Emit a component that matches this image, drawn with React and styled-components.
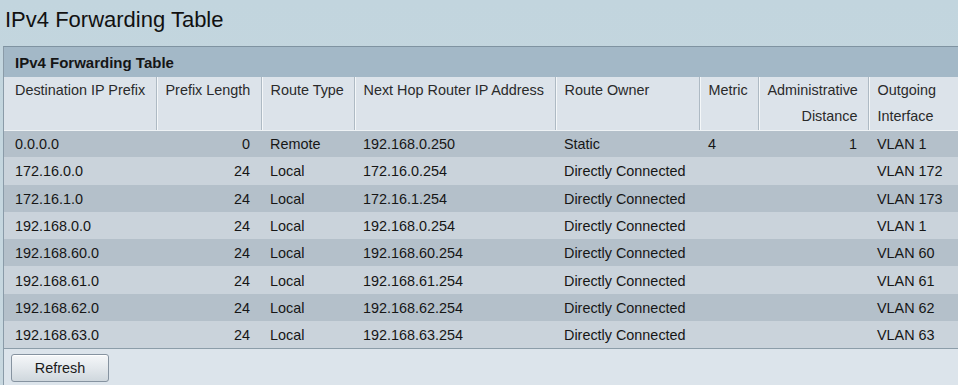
import styled, { createGlobalStyle } from "styled-components";

const GlobalStyle = createGlobalStyle`
  html, body {
    margin: 0;
    padding: 0;
    overflow: hidden;
  }
  body {
    background: linear-gradient(180deg, #c2d5de 0%, #c8d8e0 100%);
    font-family: "Liberation Sans", Arial, sans-serif;
    color: #1a1a1a;
  }
`;

const Page = styled.div`
  width: 958px;
  height: 385px;
  padding-left: 3px;
  box-sizing: border-box;
`;

const Title = styled.h1`
  margin: 0;
  padding: 5px 0 0 2px;
  height: 46px;
  box-sizing: border-box;
  font-size: 22px;
  line-height: 30px;
  font-weight: normal;
  color: #111;
`;

const Panel = styled.div`
  width: 970px;
  border-top: 1px solid #7f93a1;
  border-left: 1px solid #8a9ba8;
  background: #dce4eb;
  height: 339px;
`;

const PanelHeader = styled.div`
  height: 30px;
  line-height: 31px;
  padding-left: 11px;
  background: #a3b8c7;
  font-size: 15px;
  font-weight: bold;
  color: #151515;
`;

const Table = styled.table`
  border-collapse: collapse;
  table-layout: fixed;
  width: 969px;
  font-size: 14.4px;
  border-bottom: 1px solid #8c9da9;
`;

const Th = styled.th`
  height: 53px;
  box-sizing: border-box;
  padding: 0 ${(p) => (p.$right ? "10px" : "6px")} 0 9px;
  vertical-align: top;
  text-align: ${(p) => (p.$right ? "right" : "left")};
  font-weight: normal;
  line-height: 26px;
  color: #2a2a2a;
  background: #dce3ea;
  border-bottom: 1px solid #eef2f5;
  border-right: 1px solid #aebac4;
  box-shadow: inset 1px 0 0 #f4f7f9;

  &:first-child {
    padding-left: 11px;
    box-shadow: none;
  }
  &:last-child {
    border-right: none;
  }
`;

const Row = styled.tr`
  height: 27.3px;
  background: ${(p) => (p.$odd ? "#b4c0ca" : "#cad3db")};
`;

const Td = styled.td`
  padding: 1px ${(p) => (p.$right ? "11px" : "6px")} 0 9px;
  text-align: ${(p) => (p.$right ? "right" : "left")};
  white-space: nowrap;
  color: #161616;

  &:first-child {
    padding-left: 11px;
  }
`;

const Footer = styled.div`
  padding: 5px 0 0 7px;
`;

const Button = styled.button`
  width: 98px;
  height: 28px;
  border: 1px solid #8693a0;
  border-radius: 3px;
  background: linear-gradient(180deg, #f5f7f9 0%, #e3e8ec 50%, #cfd7dd 100%);
  font-family: "Liberation Sans", Arial, sans-serif;
  font-size: 14.4px;
  color: #1a1a1a;
  padding: 0;
  box-shadow: inset 0 1px 0 #ffffff;
`;

const columns = [
  { label: "Destination IP Prefix", width: 152 },
  { label: "Prefix Length", width: 105 },
  { label: "Route Type", width: 93 },
  { label: "Next Hop Router IP Address", width: 201 },
  { label: "Route Owner", width: 144 },
  { label: "Metric", width: 59 },
  { label: ["Administrative", "Distance"], width: 110, right: true },
  { label: ["Outgoing", "Interface"], width: 105 },
];

const routes = [
  ["0.0.0.0", "0", "Remote", "192.168.0.250", "Static", "4", "1", "VLAN 1"],
  ["172.16.0.0", "24", "Local", "172.16.0.254", "Directly Connected", "", "", "VLAN 172"],
  ["172.16.1.0", "24", "Local", "172.16.1.254", "Directly Connected", "", "", "VLAN 173"],
  ["192.168.0.0", "24", "Local", "192.168.0.254", "Directly Connected", "", "", "VLAN 1"],
  ["192.168.60.0", "24", "Local", "192.168.60.254", "Directly Connected", "", "", "VLAN 60"],
  ["192.168.61.0", "24", "Local", "192.168.61.254", "Directly Connected", "", "", "VLAN 61"],
  ["192.168.62.0", "24", "Local", "192.168.62.254", "Directly Connected", "", "", "VLAN 62"],
  ["192.168.63.0", "24", "Local", "192.168.63.254", "Directly Connected", "", "", "VLAN 63"],
];

const rightCols = [1, 6];

export default function App() {
  return (
    <>
      <GlobalStyle />
      <Page>
        <Title>IPv4 Forwarding Table</Title>
        <Panel>
          <PanelHeader>IPv4 Forwarding Table</PanelHeader>
          <Table>
            <colgroup>
              {columns.map((c, i) => (
                <col key={i} style={{ width: c.width }} />
              ))}
            </colgroup>
            <thead>
              <tr>
                {columns.map((c, i) => (
                  <Th key={i} $right={c.right}>
                    {Array.isArray(c.label) ? (
                      <>
                        {c.label[0]}
                        <br />
                        {c.label[1]}
                      </>
                    ) : (
                      c.label
                    )}
                  </Th>
                ))}
              </tr>
            </thead>
            <tbody>
              {routes.map((r, i) => (
                <Row key={i} $odd={i % 2 === 0}>
                  {r.map((cell, j) => (
                    <Td key={j} $right={rightCols.includes(j)}>
                      {cell}
                    </Td>
                  ))}
                </Row>
              ))}
            </tbody>
          </Table>
          <Footer>
            <Button>Refresh</Button>
          </Footer>
        </Panel>
      </Page>
    </>
  );
}
